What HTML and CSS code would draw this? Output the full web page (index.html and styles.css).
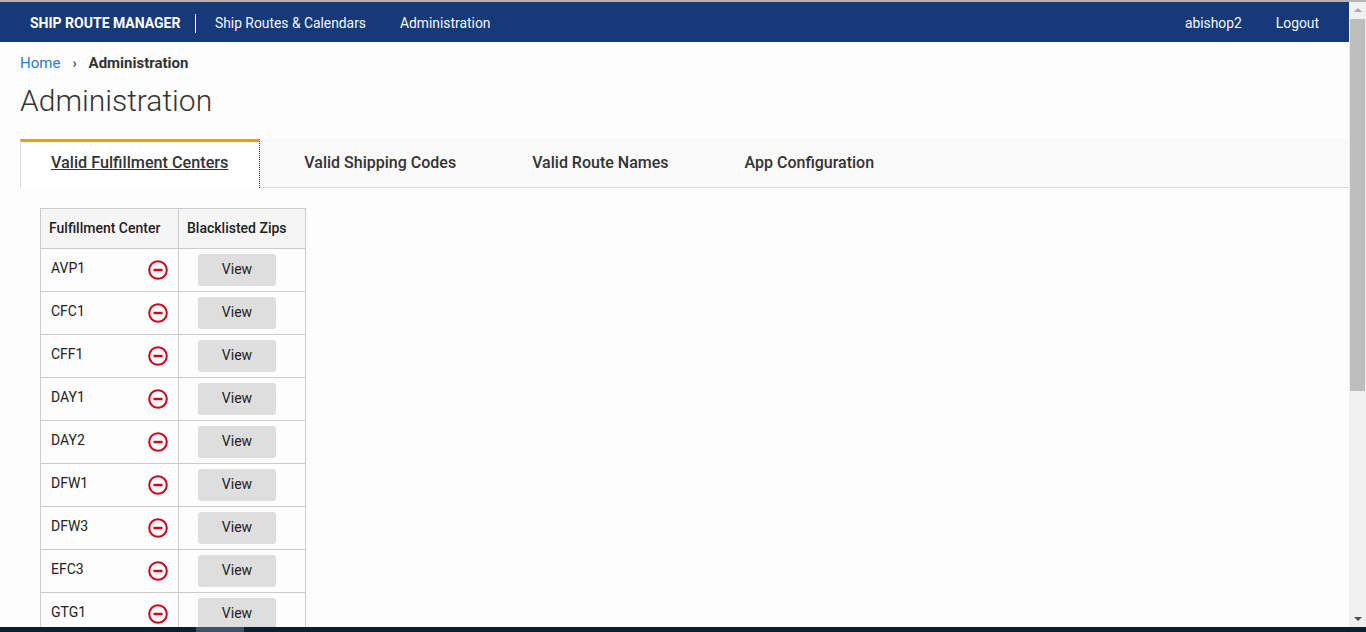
FILE: index.html
```html
<!DOCTYPE html>
<html lang="en">
<head>
<meta charset="utf-8">
<title>Administration</title>
<link rel="stylesheet" href="styles.css">
</head>
<body>
<div class="top-strip"></div>
<div class="window">
  <div class="page">
    <header class="navbar">
      <div class="nav-left">
        <span class="brand">SHIP ROUTE MANAGER</span>
        <a class="nav-link first">Ship Routes &amp; Calendars</a>
        <a class="nav-link">Administration</a>
      </div>
      <div class="nav-right">
        <a class="nav-link">abishop2</a>
        <a class="nav-link">Logout</a>
      </div>
    </header>
    <nav class="crumbs">
      <a class="crumb-home">Home</a>
      <span class="crumb-sep">›</span>
      <span class="crumb-current">Administration</span>
    </nav>
    <h1 class="title">Administration</h1>
    <div class="tabs">
      <a class="tab active">Valid Fulfillment Centers</a>
      <a class="tab">Valid Shipping Codes</a>
      <a class="tab">Valid Route Names</a>
      <a class="tab">App Configuration</a>
    </div>
    <div class="content">
      <table class="grid">
        <thead>
          <tr><th class="col-a">Fulfillment Center</th><th class="col-b">Blacklisted Zips</th></tr>
        </thead>
        <tbody>
          <tr><td><div class="fc"><span>AVP1</span><svg class="rm" viewBox="0 0 20 20"><circle cx="10" cy="10" r="8.8"/><line x1="5.5" y1="10" x2="14.5" y2="10"/></svg></div></td><td class="act"><button class="view">View</button></td></tr>
          <tr><td><div class="fc"><span>CFC1</span><svg class="rm" viewBox="0 0 20 20"><circle cx="10" cy="10" r="8.8"/><line x1="5.5" y1="10" x2="14.5" y2="10"/></svg></div></td><td class="act"><button class="view">View</button></td></tr>
          <tr><td><div class="fc"><span>CFF1</span><svg class="rm" viewBox="0 0 20 20"><circle cx="10" cy="10" r="8.8"/><line x1="5.5" y1="10" x2="14.5" y2="10"/></svg></div></td><td class="act"><button class="view">View</button></td></tr>
          <tr><td><div class="fc"><span>DAY1</span><svg class="rm" viewBox="0 0 20 20"><circle cx="10" cy="10" r="8.8"/><line x1="5.5" y1="10" x2="14.5" y2="10"/></svg></div></td><td class="act"><button class="view">View</button></td></tr>
          <tr><td><div class="fc"><span>DAY2</span><svg class="rm" viewBox="0 0 20 20"><circle cx="10" cy="10" r="8.8"/><line x1="5.5" y1="10" x2="14.5" y2="10"/></svg></div></td><td class="act"><button class="view">View</button></td></tr>
          <tr><td><div class="fc"><span>DFW1</span><svg class="rm" viewBox="0 0 20 20"><circle cx="10" cy="10" r="8.8"/><line x1="5.5" y1="10" x2="14.5" y2="10"/></svg></div></td><td class="act"><button class="view">View</button></td></tr>
          <tr><td><div class="fc"><span>DFW3</span><svg class="rm" viewBox="0 0 20 20"><circle cx="10" cy="10" r="8.8"/><line x1="5.5" y1="10" x2="14.5" y2="10"/></svg></div></td><td class="act"><button class="view">View</button></td></tr>
          <tr><td><div class="fc"><span>EFC3</span><svg class="rm" viewBox="0 0 20 20"><circle cx="10" cy="10" r="8.8"/><line x1="5.5" y1="10" x2="14.5" y2="10"/></svg></div></td><td class="act"><button class="view">View</button></td></tr>
          <tr><td><div class="fc"><span>GTG1</span><svg class="rm" viewBox="0 0 20 20"><circle cx="10" cy="10" r="8.8"/><line x1="5.5" y1="10" x2="14.5" y2="10"/></svg></div></td><td class="act"><button class="view">View</button></td></tr>
        </tbody>
      </table>
    </div>
  </div>
  <aside class="scrollbar">
    <span class="arrow-up"></span>
    <span class="thumb"></span>
    <span class="arrow-down"></span>
  </aside>
</div>
<div class="taskbar"><span class="task-item"></span></div>
</body>
</html>
```
FILE: styles.css
```css
* { box-sizing: border-box; }
html, body { margin: 0; height: 632px; overflow: hidden; }
body {
  display: flex;
  flex-direction: column;
  font-family: Roboto, "Liberation Sans", sans-serif;
  font-size: 14px;
  color: #333;
  background: #fdfdfd;
}
.top-strip { height: 2px; background: #b5b5b5; flex: none; }
.window { flex: 1; display: flex; min-height: 0; }
.page { flex: 1; min-width: 0; overflow: hidden; }

.navbar {
  height: 40px;
  background: #163a77;
  color: #fff;
  display: flex;
  justify-content: space-between;
  align-items: center;
  padding: 2px 30px 0;
}
.nav-left, .nav-right { display: flex; align-items: center; }
.brand {
  font-weight: 700;
  font-size: 14px;
  padding-right: 14.5px;
  border-right: 1px solid #fff;
  line-height: 19px;
}
.nav-link { font-size: 13.85px; color: #f4f6fa; margin-left: 34px; }
.nav-link.first { margin-left: 19px; }

.crumbs { display: flex; align-items: center; padding: 12px 20px 0; height: 30px; font-size: 15px; }
.crumb-home { color: #2a7ac4; }
.crumb-sep { margin: 0 12px; font-size: 14px; }
.crumb-current { font-weight: 700; }

.title {
  margin: 9px 0 0 20px;
  font-size: 30px;
  line-height: 40px;
  font-weight: 300;
  color: #333;
}

.tabs {
  display: flex;
  margin: 18px 0 0 20px;
  height: 49px;
  background: #f9f9f9;
  border-bottom: 1px solid #ddd;
}
.tab {
  display: flex;
  align-items: center;
  padding: 0 38px 2px 38px;
  font-size: 16px;
  font-weight: 500;
  color: #333;
}
.tab.active {
  padding: 0 31px 6px 30px;
  margin-bottom: -1px;
  height: 49px;
  background: #fff;
  border-top: 3px solid #f7980f;
  border-left: 1px solid #ddd;
  border-right: 1px dotted #333;
  font-size: 16.2px;
  text-decoration: underline;
}
.tab.active + .tab { padding-left: 44px; }

.content { padding: 20px 0 0 40px; }
.grid { border-collapse: collapse; table-layout: fixed; width: 266px; font-size: 14px; color: #222; }
.grid th, .grid td { border: 1px solid #ccc; padding: 0; }
.grid th {
  height: 40px;
  background: #f5f5f5;
  font-weight: 500;
  text-align: left;
  padding: 0 0 2px 8px;
  color: #222;
}
.col-a { width: 138px; }
.grid td { height: 43px; background: #fdfdfd; }
.fc { display: flex; align-items: center; justify-content: space-between; padding: 0 10px 2px 10px; }
.fc span { position: relative; top: -1px; }
.rm { width: 20px; height: 20px; margin-top: 2px; fill: none; stroke: #d0021b; stroke-width: 2; }
.rm line { stroke-width: 2.4; }
.act { text-align: center; }
.view {
  width: 78px;
  height: 32px;
  border: 0;
  border-radius: 3px;
  background: #dedede;
  color: #222;
  font: 400 14px Roboto, "Liberation Sans", sans-serif;
  display: block;
  margin: 0 auto 0 19px;
  padding: 0 0 2px;
}

.scrollbar {
  width: 17px;
  flex: none;
  background: #f0f0f0;
  display: flex;
  flex-direction: column;
  align-items: center;
}
.arrow-up {
  width: 0; height: 0;
  margin-top: 6px;
  border-left: 4px solid transparent;
  border-right: 4px solid transparent;
  border-bottom: 4px solid #a8a8a8;
}
.thumb { width: 15px; height: 372px; margin-top: 7px; background: #bdbdbd; }
.arrow-down {
  width: 0; height: 0;
  margin-top: auto;
  margin-bottom: 6px;
  border-left: 4px solid transparent;
  border-right: 4px solid transparent;
  border-top: 4px solid #505050;
}

.taskbar { height: 5px; flex: none; background: #0b1f33; padding-left: 196px; }
.task-item { display: block; width: 48px; height: 5px; background: #3c5266; }
```
